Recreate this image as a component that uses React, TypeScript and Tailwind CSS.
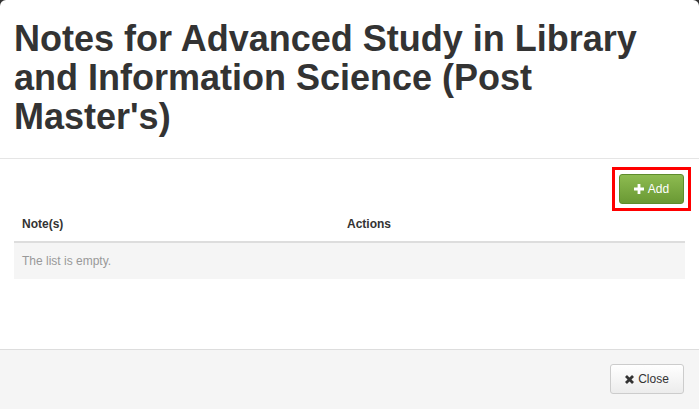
import React from 'react';

const PlusIcon: React.FC = () => (
  <svg width="10" height="10" viewBox="0 0 10 10" className="shrink-0">
    <path d="M3.6 0h2.8v3.6H10v2.8H6.4V10H3.6V6.4H0V3.6h3.6z" fill="currentColor" />
  </svg>
);

const CloseIcon: React.FC = () => (
  <svg width="9" height="9" viewBox="0 0 10 10" className="shrink-0">
    <path d="M2.2 0L5 2.8 7.8 0 10 2.2 7.2 5 10 7.8 7.8 10 5 7.2 2.2 10 0 7.8 2.8 5 0 2.2z" fill="currentColor" />
  </svg>
);

export default function App() {
  return (
    <div className="w-[699px] h-[409px] overflow-hidden bg-[#333333] font-['Liberation_Sans',Arial,sans-serif] text-[#333333]">
      <div className="h-full bg-white rounded-[6px] flex flex-col">
        <div className="px-[14px] pt-[19px] pb-[22px] border-b border-[#e5e5e5]">
          <h1 className="font-['Liberation_Sans_Narrow','Liberation_Sans',Arial,sans-serif] font-bold text-[36px] leading-[39px] text-[#333333]">
            Notes for Advanced Study in Library and Information Science (Post Master's)
          </h1>
        </div>

        <div className="flex-1 px-[14px] pt-[15px]">
          <div className="flex justify-end pr-px">
            <div className="relative">
              <button className="flex items-center gap-[4px] h-[30px] w-[65px] justify-center rounded-[3px] border border-[#5e8c2c] bg-gradient-to-b from-[#8dbb50] to-[#6a9934] text-white text-[12px]">
                <PlusIcon />
                <span>Add</span>
              </button>
              <span className="pointer-events-none absolute -inset-[7px] border-[3px] border-[#ff0000]" />
            </div>
          </div>

          <table className="w-full mt-[4px] text-[12px] border-collapse">
            <thead>
              <tr className="border-b-2 border-[#dddddd]">
                <th className="w-[325px] text-left font-bold px-[8px] py-[8px] leading-[17px]">Note(s)</th>
                <th className="text-left font-bold px-[8px] py-[8px] leading-[17px]">Actions</th>
              </tr>
            </thead>
            <tbody>
              <tr className="bg-[#f5f5f5]">
                <td colSpan={2} className="px-[8px] py-[8px] leading-[20px] text-[#999999]">The list is empty.</td>
              </tr>
            </tbody>
          </table>
        </div>

        <div className="h-[60px] shrink-0 bg-[#f5f5f5] border-t border-[#dddddd] px-[15px] pt-[14px] flex justify-end items-start">
          <button className="flex items-center justify-center gap-[4px] h-[30px] w-[74px] rounded-[3px] border border-[#cccccc] bg-gradient-to-b from-white to-[#ececec] text-[#333333] text-[12px]">
            <CloseIcon />
            <span>Close</span>
          </button>
        </div>
      </div>
    </div>
  );
}
